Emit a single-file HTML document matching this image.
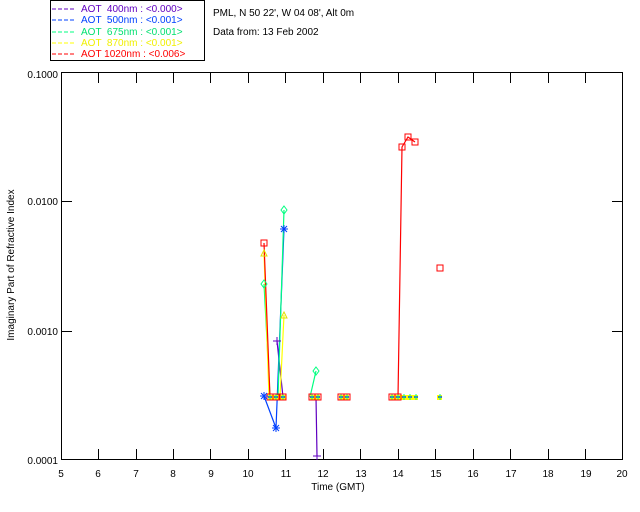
<!DOCTYPE html>
<html><head><style>
body{margin:0;background:#fff;width:640px;height:512px;overflow:hidden}
svg{display:block}
text{font-family:"Liberation Sans",sans-serif;font-size:10px;white-space:pre}
</style></head><body>
<svg width="640" height="512" xmlns="http://www.w3.org/2000/svg">
<rect x="50.5" y="0.5" width="154" height="60" fill="none" stroke="#000"/>
<g font-size="10">
<line x1="52" y1="9" x2="74" y2="9" stroke="#6000c0" stroke-dasharray="4,2"/>
<text x="81" y="12" fill="#6000c0" xml:space="preserve">AOT  400nm : &lt;0.000&gt;</text>
<line x1="52" y1="20" x2="74" y2="20" stroke="#0040ff" stroke-dasharray="4,2"/>
<text x="81" y="23" fill="#0040ff" xml:space="preserve">AOT  500nm : &lt;0.001&gt;</text>
<line x1="52" y1="32" x2="74" y2="32" stroke="#00ff80" stroke-dasharray="4,2"/>
<text x="81" y="35" fill="#00e070" xml:space="preserve">AOT  675nm : &lt;0.001&gt;</text>
<line x1="52" y1="43" x2="74" y2="43" stroke="#ffff00" stroke-dasharray="4,2"/>
<text x="81" y="46" fill="#f0f000" xml:space="preserve">AOT  870nm : &lt;0.001&gt;</text>
<line x1="52" y1="54" x2="74" y2="54" stroke="#ff0000" stroke-dasharray="4,2"/>
<text x="81" y="57" fill="#ff0000" xml:space="preserve">AOT 1020nm : &lt;0.006&gt;</text>
</g>
<text x="213" y="16">PML, N 50 22', W 04 08', Alt 0m</text>
<text x="213" y="35">Data from: 13 Feb 2002</text>
<rect x="61.5" y="72.5" width="561" height="387" fill="none" stroke="#000"/>
<g stroke="#000">
<path d="M98.5 73v10M136.5 73v10M173.5 73v10M210.5 73v10M248.5 73v10M285.5 73v10M323.5 73v10M360.5 73v10M398.5 73v10M435.5 73v10M473.5 73v10M510.5 73v10M548.5 73v10M585.5 73v10"/>
<path d="M98.5 459v-10M136.5 459v-10M173.5 459v-10M210.5 459v-10M248.5 459v-10M285.5 459v-10M323.5 459v-10M360.5 459v-10M398.5 459v-10M435.5 459v-10M473.5 459v-10M510.5 459v-10M548.5 459v-10M585.5 459v-10"/>
<path d="M62 201.5h10M62 331.5h10M612 201.5h10M612 331.5h10"/>
</g>
<g text-anchor="end" font-size="10">
<text x="58" y="78">0.1000</text><text x="58" y="205">0.0100</text><text x="58" y="335">0.0010</text><text x="58" y="464">0.0001</text>
</g>
<g text-anchor="middle">
<text x="61" y="477">5</text><text x="98" y="477">6</text><text x="136" y="477">7</text><text x="173" y="477">8</text><text x="211" y="477">9</text><text x="248" y="477">10</text><text x="286" y="477">11</text><text x="323" y="477">12</text><text x="361" y="477">13</text><text x="398" y="477">14</text><text x="436" y="477">15</text><text x="473" y="477">16</text><text x="511" y="477">17</text><text x="548" y="477">18</text><text x="586" y="477">19</text><text x="622" y="477">20</text>
<text x="338" y="490">Time (GMT)</text>
<text transform="translate(14,265) rotate(-90)">Imaginary Part of Refractive Index</text>
</g>
<g fill="none" stroke-width="1.2">
<path d="M277 341L283 397M316 397L317 456" stroke="#6000c0"/>
<path d="M264 396L276 428L284 229" stroke="#0040ff"/>
<path d="M264 284L270 397M278 397L284 210M310 397L316 371" stroke="#00ff80"/>
<path d="M264 253L269 397M280 397L284 315" stroke="#ffff00"/>
<path d="M264 243L270 397M398 397L402 147L408 137L415 142" stroke="#ff0000"/>
</g>
<g fill="#ffff00">
<rect x="268" y="395" width="18" height="5"/><rect x="310" y="395" width="10" height="5"/><rect x="339" y="395" width="10" height="5"/><rect x="390" y="395" width="28" height="5"/><rect x="437" y="395" width="5" height="5"/>
</g>
<g stroke="#0040ff" stroke-width="1.5">
<path d="M268 397h4M274 397h4M281 397h4M310 397h4M316 397h4M339 397h4M345 397h4M390 397h4M396 397h4M402 397h4M408 397h4M414 397h4M438 397h4"/>
<path d="M270 394v6M276 394v6M283 394v6M312 394v6M318 394v6M341 394v6M347 394v6M392 394v6M398 394v6M404 394v6M410 394v6M416 394v6M440 394v6" stroke="#00ff80" stroke-width="1"/>
</g>
<g fill="none" stroke="#ff0000">
<rect x="261" y="240" width="6" height="6"/><rect x="267" y="394" width="6" height="6"/><rect x="273" y="394" width="6" height="6"/><rect x="280" y="394" width="6" height="6"/>
<rect x="309" y="394" width="6" height="6"/><rect x="315" y="394" width="6" height="6"/><rect x="338" y="394" width="6" height="6"/><rect x="344" y="394" width="6" height="6"/>
<rect x="389" y="394" width="6" height="6"/><rect x="395" y="394" width="6" height="6"/>
<rect x="399" y="144" width="6" height="6"/><rect x="405" y="134" width="6" height="6"/><rect x="412" y="139" width="6" height="6"/><rect x="437" y="265" width="6" height="6"/>
</g>
<g stroke="#0040ff">
<path d="M260 396h8M264 392v8M261 393l6 6M267 393l-6 6M272 428h8M276 424v8M273 425l6 6M279 425l-6 6M280 229h8M284 225v8M281 226l6 6M287 226l-6 6"/>
</g>
<g stroke="#00ff80" fill="none"><path d="M284 206l3 4-3 4-3-4zM264 280l3 4-3 4-3-4zM316 367l3 4-3 4-3-4z"/></g>
<g stroke="#6000c0"><path d="M277 337v8M273 341h8M317 452v8M313 456h8"/></g>
<g stroke="#e0e000" fill="none"><path d="M264 250l3 6h-6zM284 312l3 6h-6z"/></g>
</svg>
</body></html>
